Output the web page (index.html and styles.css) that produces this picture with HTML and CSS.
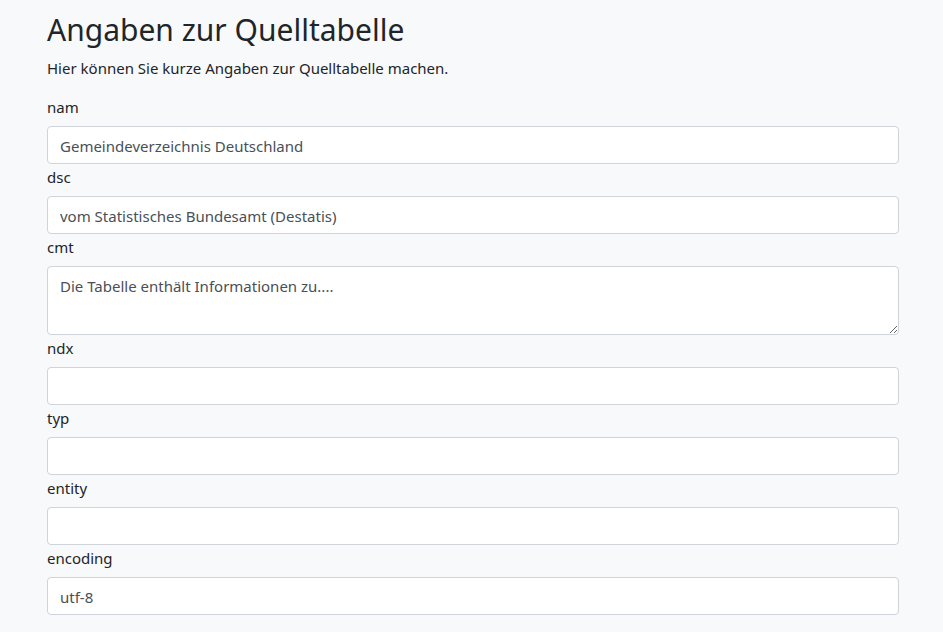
FILE: index.html
```html
<!DOCTYPE html>
<html lang="de">
<head>
  <meta charset="UTF-8" />
  <meta name="viewport" content="width=device-width, initial-scale=1.0"/>
  <title>Angaben zur Quelltabelle</title>
  <link rel="stylesheet" href="styles.css">
</head>
<body>

  <div class="container">
    <h1>Angaben zur Quelltabelle</h1>
    <p class="lead-text">Hier können Sie kurze Angaben zur Quelltabelle machen.</p>

    <form class="source-form">
      <label for="nam">nam</label>
      <input type="text" id="nam" class="form-control" value="Gemeindeverzeichnis Deutschland" />

      <label for="dsc">dsc</label>
      <input type="text" id="dsc" class="form-control" value="vom Statistisches Bundesamt (Destatis)" />

      <label for="cmt">cmt</label>
      <textarea id="cmt" class="form-control area">Die Tabelle enthält Informationen zu....</textarea>

      <label for="ndx">ndx</label>
      <input type="text" id="ndx" class="form-control" />

      <label for="typ">typ</label>
      <input type="text" id="typ" class="form-control" />

      <label for="entity">entity</label>
      <input type="text" id="entity" class="form-control" />

      <label for="encoding">encoding</label>
      <input type="text" id="encoding" class="form-control" value="utf-8" />
    </form>
  </div>

</body>
</html>
```

FILE: styles.css
```css
/* Grundlayout */
body {
  font-family: 'Noto Sans', 'Open Sans', sans-serif;
  font-size: 15px;
  line-height: 24px;
  background-color: #f8f9fa;
  color: #212529;
  margin: 0;
  padding: 0;
}

.container {
  padding: 0 44px 0 47px;
}

h1 {
  font-size: 30px;
  font-weight: 400;
  line-height: 40px;
  margin: 10px 0 6px;
}

.lead-text {
  margin: 0 0 14px;
}

/* Formular */
.source-form {
  display: flex;
  flex-direction: column;
}

.source-form label {
  display: block;
  margin: 1px 0 7px;
}

.form-control {
  display: block;
  width: 100%;
  height: 38px;
  box-sizing: border-box;
  padding: 7px 12px 5px;
  font-family: inherit;
  font-size: 15px;
  line-height: 24px;
  color: #495057;
  background-color: #fff;
  border: 1px solid #ced4da;
  border-radius: 4px;
  margin: 0;
}

.form-control.area {
  height: 69px;
  resize: vertical;
}
```
